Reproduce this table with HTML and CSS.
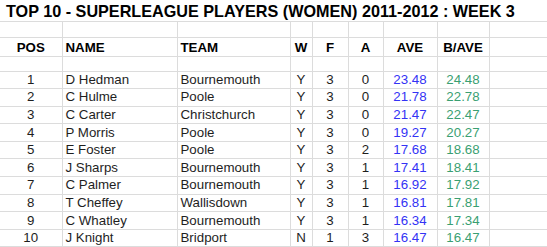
FILE: index.html
```html
<!DOCTYPE html>
<html lang="en">
<head>
    <meta charset="UTF-8">
    <title>Top 10 - Superleague Players (Women)</title>
    <link rel="stylesheet" href="styles.css">
</head>
<body>
    <div class="sheet">
        <div class="title">TOP 10 - SUPERLEAGUE PLAYERS (WOMEN) 2011-2012 : WEEK 3</div>
        <table class="grid">
            <colgroup>
                <col class="c-pos"><col class="c-name"><col class="c-team">
                <col class="c-w"><col class="c-f"><col class="c-a">
                <col class="c-ave"><col class="c-bave"><col>
            </colgroup>
            <tr class="blank blank-top"><td></td><td></td><td></td><td></td><td></td><td></td><td></td><td></td><td></td></tr>
            <tr class="head">
                <th class="mid">POS</th>
                <th>NAME</th>
                <th>TEAM</th>
                <th class="mid">W</th>
                <th class="mid">F</th>
                <th class="mid">A</th>
                <th class="mid">AVE</th>
                <th class="mid">B/AVE</th>
                <th></th>
            </tr>
            <tr class="blank"><td></td><td></td><td></td><td></td><td></td><td></td><td></td><td></td><td></td></tr>
            <tr><td class="mid">1</td><td>D Hedman</td><td>Bournemouth</td><td class="mid">Y</td><td class="mid">3</td><td class="mid">0</td><td class="mid ave">23.48</td><td class="mid bave">24.48</td><td></td></tr>
            <tr><td class="mid">2</td><td>C Hulme</td><td>Poole</td><td class="mid">Y</td><td class="mid">3</td><td class="mid">0</td><td class="mid ave">21.78</td><td class="mid bave">22.78</td><td></td></tr>
            <tr><td class="mid">3</td><td>C Carter</td><td>Christchurch</td><td class="mid">Y</td><td class="mid">3</td><td class="mid">0</td><td class="mid ave">21.47</td><td class="mid bave">22.47</td><td></td></tr>
            <tr><td class="mid">4</td><td>P Morris</td><td>Poole</td><td class="mid">Y</td><td class="mid">3</td><td class="mid">0</td><td class="mid ave">19.27</td><td class="mid bave">20.27</td><td></td></tr>
            <tr><td class="mid">5</td><td>E Foster</td><td>Poole</td><td class="mid">Y</td><td class="mid">3</td><td class="mid">2</td><td class="mid ave">17.68</td><td class="mid bave">18.68</td><td></td></tr>
            <tr><td class="mid">6</td><td>J Sharps</td><td>Bournemouth</td><td class="mid">Y</td><td class="mid">3</td><td class="mid">1</td><td class="mid ave">17.41</td><td class="mid bave">18.41</td><td></td></tr>
            <tr><td class="mid">7</td><td>C Palmer</td><td>Bournemouth</td><td class="mid">Y</td><td class="mid">3</td><td class="mid">1</td><td class="mid ave">16.92</td><td class="mid bave">17.92</td><td></td></tr>
            <tr><td class="mid">8</td><td>T Cheffey</td><td>Wallisdown</td><td class="mid">Y</td><td class="mid">3</td><td class="mid">1</td><td class="mid ave">16.81</td><td class="mid bave">17.81</td><td></td></tr>
            <tr><td class="mid">9</td><td>C Whatley</td><td>Bournemouth</td><td class="mid">Y</td><td class="mid">3</td><td class="mid">1</td><td class="mid ave">16.34</td><td class="mid bave">17.34</td><td></td></tr>
            <tr><td class="mid">10</td><td>J Knight</td><td>Bridport</td><td class="mid">N</td><td class="mid">1</td><td class="mid">3</td><td class="mid ave">16.47</td><td class="mid bave">16.47</td><td></td></tr>
        </table>
    </div>
</body>
</html>
```

FILE: styles.css
```css
:root {
    --line: #dcdcdc;
    --text: #1e1e1e;
    --ave: #3333f5;
    --bave: #3a9f72;
}
body {
    margin: 0;
    background: #fff;
    color: var(--text);
    font-family: "Liberation Sans", Arial, sans-serif;
}
.sheet {
    width: 547px;
    overflow: hidden;
}
.title {
    height: 22px;
    line-height: 23px;
    padding-left: 6px;
    font-size: 16.2px;
    font-weight: bold;
    color: #000;
    white-space: nowrap;
    border-bottom: 1px solid var(--line);
    box-sizing: border-box;
}
/* Spreadsheet grid */
.grid {
    width: 547px;
    table-layout: fixed;
    border-collapse: collapse;
    font-size: 13.3px;
}
.c-pos { width: 62px; }
.c-name { width: 115px; }
.c-team { width: 113px; }
.c-w { width: 22px; }
.c-f { width: 36px; }
.c-a { width: 35px; }
.c-ave { width: 54px; }
.c-bave { width: 52px; }
.grid td, .grid th {
    border: 1px solid var(--line);
    border-top: none;
    padding: 0 0 0 3px;
    height: 17.6px;
    line-height: 16px;
    text-align: left;
    white-space: nowrap;
    box-sizing: border-box;
}
.grid tr td:first-child, .grid tr th:first-child {
    border-left: none;
}
.grid tr td:last-child, .grid tr th:last-child {
    border-right: none;
}
.grid th {
    font-weight: bold;
    color: #000;
}
.grid .blank-top td { height: 14px; }
.grid .blank td { height: 15px; }
.grid .head th { height: 19px; padding-top: 2px; }
.grid .mid {
    text-align: center;
    padding: 0;
}
.ave { color: var(--ave); }
.bave { color: var(--bave); }
```
